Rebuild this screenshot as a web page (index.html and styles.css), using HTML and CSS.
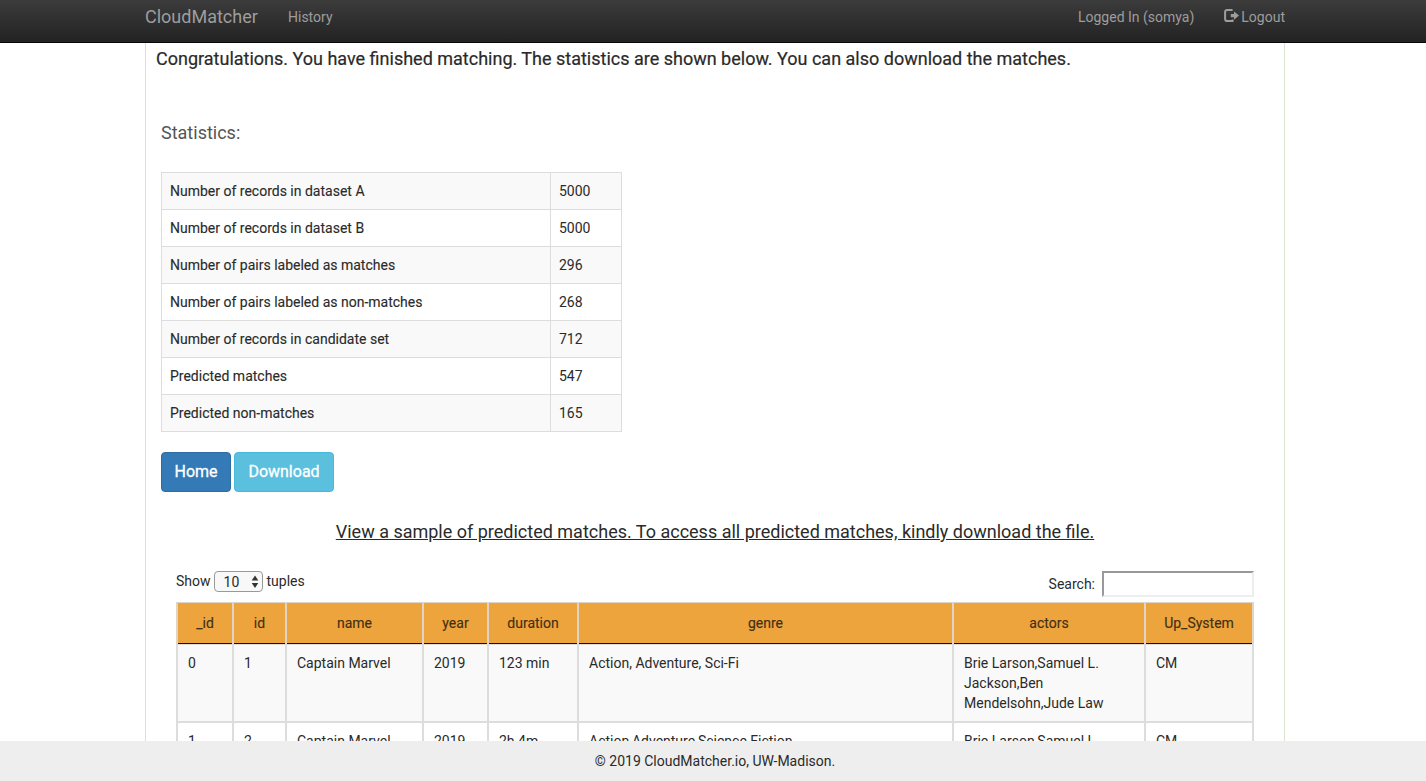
FILE: index.html
```html
<!DOCTYPE html>
<html lang="en">
<head>
<meta charset="utf-8">
<title>CloudMatcher</title>
<link rel="stylesheet" href="styles.css">
</head>
<body>
<header class="navbar">
  <nav class="navbar-inner">
    <a class="brand">CloudMatcher</a>
    <a class="history">History</a>
    <span class="user">Logged In (somya)</span>
    <a class="logout"><svg class="logout-icon" viewBox="0 0 16 14"><path d="M8.6 1.1H3.2Q1.1 1.1 1.1 3.2V10Q1.1 12.1 3.2 12.1H8.6V10.6" fill="none" stroke="currentColor" stroke-width="2"/><path d="M10 2.4 15 6.6 10 10.8V8.2H6.8V5H10Z" fill="currentColor"/></svg>Logout</a>
  </nav>
</header>
<main class="page">
  <div class="container">
    <h4 class="message">Congratulations. You have finished matching. The statistics are shown below. You can also download the matches.</h4>
    <h4 class="heading">Statistics:</h4>
    <table class="stats">
      <tr><th>Number of records in dataset A</th><td>5000</td></tr>
      <tr><th>Number of records in dataset B</th><td>5000</td></tr>
      <tr><th>Number of pairs labeled as matches</th><td>296</td></tr>
      <tr><th>Number of pairs labeled as non-matches</th><td>268</td></tr>
      <tr><th>Number of records in candidate set</th><td>712</td></tr>
      <tr><th>Predicted matches</th><td>547</td></tr>
      <tr><th>Predicted non-matches</th><td>165</td></tr>
    </table>
    <div class="actions">
      <button class="btn btn-home">Home</button>
      <button class="btn btn-download">Download</button>
    </div>
    <h4 class="sample-title">View a sample of predicted matches. To access all predicted matches, kindly download the file.</h4>
    <section class="sample">
      <div class="controls">
        <div class="length">Show
          <span class="select">10<svg class="arrows" viewBox="0 0 8 14"><path d="M4 0.5 7.3 5.6H0.7ZM4 13 7.3 8H0.7Z" fill="#333"/></svg></span>
          tuples</div>
        <label class="search">Search: <input class="search-input" type="text"></label>
      </div>
      <table class="tuples">
        <colgroup><col class="c-first"><col class="c-id"><col class="c-name"><col class="c-year"><col class="c-duration"><col class="c-genre"><col class="c-actors"><col class="c-system"></colgroup>
        <thead><tr><th>_id</th><th>id</th><th>name</th><th>year</th><th>duration</th><th>genre</th><th>actors</th><th>Up_System</th></tr></thead>
        <tbody>
          <tr><td>0</td><td>1</td><td>Captain Marvel</td><td>2019</td><td>123 min</td><td>Action, Adventure, Sci-Fi</td><td>Brie Larson,Samuel L. Jackson,Ben Mendelsohn,Jude Law</td><td>CM</td></tr>
          <tr><td>1</td><td>2</td><td>Captain Marvel</td><td>2019</td><td>2h 4m</td><td>Action,Adventure,Science Fiction</td><td>Brie Larson,Samuel L.</td><td>CM</td></tr>
        </tbody>
      </table>
    </section>
  </div>
</main>
<footer class="footer">© 2019 CloudMatcher.io, UW-Madison.</footer>
</body>
</html>
```
FILE: styles.css
```css
* { box-sizing: border-box; }
body {
  margin: 0;
  height: 781px;
  display: flex;
  flex-direction: column;
  overflow: hidden;
  font: 14px/20px Roboto, sans-serif;
  color: #2a2a2a;
  background: #fff;
}
h4 { margin: 0; font-size: 18px; line-height: 20px; white-space: nowrap; }

.navbar {
  flex: none;
  height: 43px;
  background: linear-gradient(#3c3c3c, #222);
  border-bottom: 1px solid #080808;
  color: #9d9d9d;
}
.navbar-inner {
  width: 1140px;
  margin-left: 145px;
  padding-top: 7px;
  display: flex;
  align-items: center;
}
.brand { width: 143px; font-size: 18px; }
.user { margin-left: auto; }
.logout { margin-left: 30px; display: flex; }
.logout-icon { width: 16px; height: 14px; margin: 2px 1px 0 0; }

.page { flex: 1; min-height: 0; overflow: hidden; }
.container {
  width: 1140px;
  height: 900px;
  margin-left: 145px;
  padding: 6px 30px 0 15px;
  border: solid #d8e4d0;
  border-width: 0 1px;
}
.message { margin-left: -5px; font-weight: 400; -webkit-text-stroke: 0.2px; }
.heading { margin-top: 54px; font-weight: 400; color: #555; }

.stats {
  margin-top: 29px;
  width: 461px;
  border-collapse: collapse;
  table-layout: fixed;
}
.stats th, .stats td {
  height: 37px;
  padding: 0 8px;
  border: 1px solid #ddd;
  text-align: left;
  font-weight: 400;
}
.stats th { width: 389px; -webkit-text-stroke: 0.12px; }
.stats tr:nth-child(odd) { background: #f9f9f9; }

.actions { margin-top: 20px; display: flex; gap: 3px; }
.btn {
  height: 40px;
  padding: 0 0 2px;
  border: 1px solid;
  border-radius: 4px;
  font: 400 16px Roboto, sans-serif;
  -webkit-text-stroke: 0.3px;
  color: #fff;
}
.btn-home { width: 70px; background: #337ab7; border-color: #2e6da4; }
.btn-download { width: 100px; background: #5bc0de; border-color: #46b8da; }

.sample-title {
  margin: 30px -15px 0 0;
  text-align: center;
  font-weight: 400;
  text-decoration: underline;
}
.sample { margin: 29px 0 0 15px; width: 1078px; }
.controls { height: 31px; display: flex; justify-content: space-between; align-items: flex-start; }
.length { display: flex; gap: 3px; }
.select {
  width: 49px;
  height: 21px;
  margin-right: 1px;
  padding: 0 3px 0 9px;
  display: flex;
  justify-content: space-between;
  align-items: center;
  border: 1px solid #999;
  border-radius: 4px;
  background: #f8f8f8;
}
.arrows { width: 8px; height: 14px; }
.search { display: flex; align-items: center; gap: 7px; }
.search-input { width: 152px; height: 26px; border: 2px solid #eee; border-color: #999 #eee #eee #999; }

.tuples {
  width: 1078px;
  table-layout: fixed;
  border-collapse: separate;
  border-spacing: 0;
}
.c-first { width: 58px; }
.c-id { width: 53px; }
.c-name { width: 137px; }
.c-year { width: 65px; }
.c-duration { width: 90px; }
.c-genre { width: 375px; }
.c-actors { width: 192px; }
.c-system { width: 108px; }
.tuples th {
  height: 42px;
  padding: 0 0 1px;
  font-weight: 400;
  -webkit-text-stroke: 0.12px;
  color: #3f2f15;
  background: #eea43c;
  background-clip: padding-box;
  border: solid #ddd;
  border-color: #e0d6c8;
  border-width: 1px 2px 0 0;
  box-shadow: inset 0 -1px #111;
}
.tuples td {
  padding: 8px 0 8px 10px;
  vertical-align: top;
  border: solid #ddd;
  border-width: 0 2px 2px 0;
}
.tuples th:first-child, .tuples td:first-child { border-left-width: 2px; }
.tuples tbody tr:first-child { background: #f9f9f9; }
.tuples tbody tr:first-child td { border-top: 1px solid #ddd; }

.footer {
  flex: none;
  height: 40px;
  padding: 10px 0 0 4px;
  text-align: center;
  background: #eee;
}
```
